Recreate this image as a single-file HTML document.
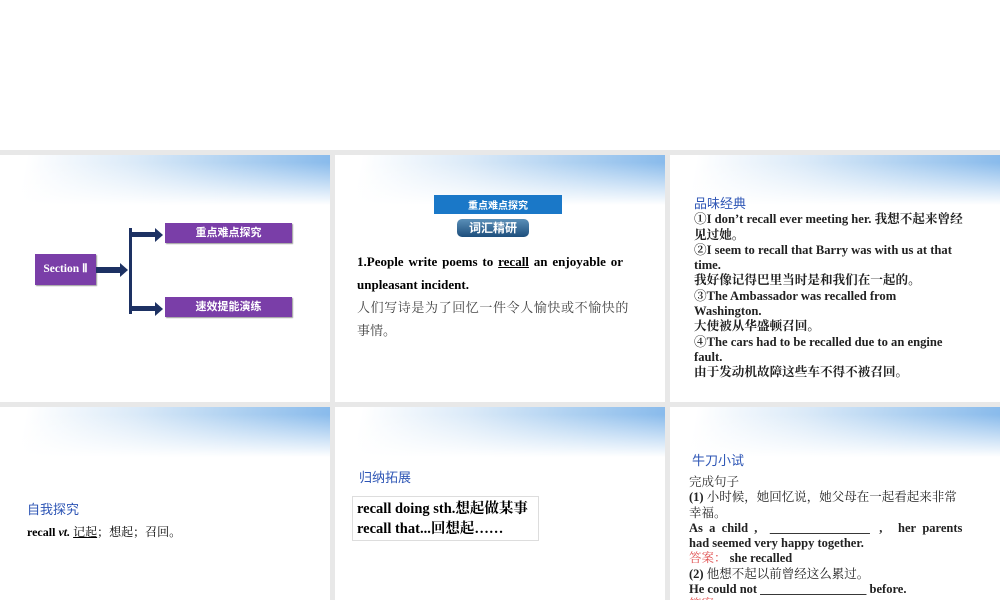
<!DOCTYPE html>
<html><head><meta charset="utf-8"><style>
*{margin:0;padding:0;box-sizing:border-box}
body{width:1000px;height:600px;position:relative;background:#fff;overflow:hidden;font-family:"Liberation Serif","Noto Serif CJK SC",serif}
.bg{position:absolute;left:0;top:150px;width:1000px;height:450px;background:#e8e8e8}
.s{position:absolute;background:#fff;overflow:hidden}
.hd{position:absolute;left:0;top:0;width:100%;height:50px;background:linear-gradient(100deg,#fff 8%,#dbeaf8 40%,#afd1f1 70%,#86b9eb 100%)}
.hd::after{content:"";position:absolute;left:0;top:0;width:100%;height:50px;background:linear-gradient(to bottom,rgba(255,255,255,0) 15%,#fff 100%)}
.a{position:absolute;white-space:nowrap}
.b{font-weight:bold}
.blue{color:#2d55b5;font-family:"Liberation Sans","Noto Sans CJK SC",sans-serif}
.pb{position:absolute;background:#7a3ea8;color:#fff;font-weight:bold;font-size:11px;font-family:"Liberation Sans","Noto Sans CJK SC",sans-serif;text-align:center;box-shadow:1px 1px 1px #999}
</style></head><body>
<div class="bg"></div>

<div class="s" style="left:0;top:155px;width:330px;height:247px">
<div class="hd"></div>
<div class="pb" style="left:35px;top:99px;width:61px;height:31px;line-height:31px;font-family:'Liberation Serif',serif;font-size:11.5px">Section Ⅱ</div>
<div style="position:absolute;left:96px;top:112px;width:24px;height:6px;background:#1d3163"></div>
<div style="position:absolute;left:120px;top:108px;border-left:8px solid #1d3163;border-top:7px solid transparent;border-bottom:7px solid transparent"></div>
<div style="position:absolute;left:129px;top:73px;width:3px;height:86px;background:#1d3163"></div>
<div style="position:absolute;left:131px;top:77px;width:25px;height:5px;background:#1d3163"></div>
<div style="position:absolute;left:155px;top:73px;border-left:8px solid #1d3163;border-top:7px solid transparent;border-bottom:7px solid transparent"></div>
<div style="position:absolute;left:131px;top:151px;width:25px;height:5px;background:#1d3163"></div>
<div style="position:absolute;left:155px;top:147px;border-left:8px solid #1d3163;border-top:7px solid transparent;border-bottom:7px solid transparent"></div>
<div class="pb" style="left:165px;top:68px;width:127px;height:20px;line-height:20px">重点难点探究</div>
<div class="pb" style="left:165px;top:142px;width:127px;height:20px;line-height:20px">速效提能演练</div>
</div>

<div class="s" style="left:335px;top:155px;width:330px;height:247px">
<div class="hd"></div>
<div class="a" style="left:99px;top:40px;width:128px;height:19px;background:#1a78c8;color:#fff;font-size:10px;text-align:center;line-height:19px;font-family:'Noto Sans CJK SC',sans-serif;font-weight:bold">重点难点探究</div>
<div class="a" style="left:122px;top:64px;width:72px;height:18px;border-radius:5px;background:linear-gradient(#5a8fb8,#1d4e7c);color:#fff;font-size:12px;text-align:center;line-height:18px;font-family:'Noto Sans CJK SC',sans-serif;font-weight:bold">词汇精研</div>
<div class="a b" style="left:22px;top:95px;width:266px;font-size:13px;line-height:23px;white-space:normal;text-align:justify;text-align-last:justify">1.People write poems to <u>recall</u> an enjoyable or</div>
<div class="a b" style="left:22px;top:118px;font-size:13px;line-height:23px">unpleasant incident.</div>
<div class="a" style="left:22px;top:141px;font-size:13px;line-height:23px;color:#444;letter-spacing:0.6px">人们写诗是为了回忆一件令人愉快或不愉快的</div>
<div class="a" style="left:22px;top:164px;font-size:13px;line-height:23px;color:#444">事情。</div>
</div>

<div class="s" style="left:670px;top:155px;width:330px;height:247px">
<div class="hd"></div>
<div class="a" style="left:24px;top:41px;font-size:12.6px;line-height:15.3px;color:#222">
<span class="blue" style="font-size:13px">品味经典</span><br>
<b>①I don’t recall ever meeting her. 我想不起来曾经</b><br>
<b>见过她。</b><br>
<b>②I seem to recall that Barry was with us at that</b><br>
<b>time.</b><br>
<b>我好像记得巴里当时是和我们在一起的。</b><br>
<b>③The Ambassador was recalled from</b><br>
<b>Washington.</b><br>
<b>大使被从华盛顿召回。</b><br>
<b>④The cars had to be recalled due to an engine</b><br>
<b>fault.</b><br>
<b>由于发动机故障这些车不得不被召回。</b>
</div>
</div>

<div class="s" style="left:0;top:407px;width:330px;height:193px">
<div class="hd"></div>
<div class="a blue" style="left:27px;top:92px;font-size:13px">自我探究</div>
<div class="a" style="left:27px;top:116px;font-size:12px"><b>recall <i>vt.</i></b> <u>记起</u>；想起；召回。</div>
</div>

<div class="s" style="left:335px;top:407px;width:330px;height:193px">
<div class="hd"></div>
<div class="a blue" style="left:24px;top:60px;font-size:13px">归纳拓展</div>
<div class="a b" style="left:17px;top:89px;width:187px;height:45px;border:1px solid #ddd;padding:2px 4px;font-size:14.5px;line-height:20px">recall doing sth.想起做某事<br>recall that...回想起……</div>
</div>

<div class="s" style="left:670px;top:407px;width:330px;height:193px">
<div class="hd"></div>
<div class="a blue" style="left:22px;top:43px;font-size:13px;font-weight:normal">牛刀小试</div>
<div class="a" style="left:19px;top:68px;font-size:12.5px;line-height:15.3px;color:#222">
<span style="color:#333">完成句子</span><br>
<b>(1)</b> 小时候，她回忆说，她父母在一起看起来非常<br>
幸福。<br>
<b>As&nbsp; a&nbsp; child&nbsp; ,&nbsp;&nbsp;&nbsp; ________________&nbsp;&nbsp; ,&nbsp;&nbsp;&nbsp;&nbsp; her&nbsp; parents</b><br>
<b>had seemed very happy together.</b><br>
<span style="color:#e05050">答案：</span> <b>she recalled</b><br>
<b>(2)</b> 他想不起以前曾经这么累过。<br>
<b>He could not _________________ before.</b><br>
<span style="color:#e05050">答案</span>
</div>
</div>
</body></html>
